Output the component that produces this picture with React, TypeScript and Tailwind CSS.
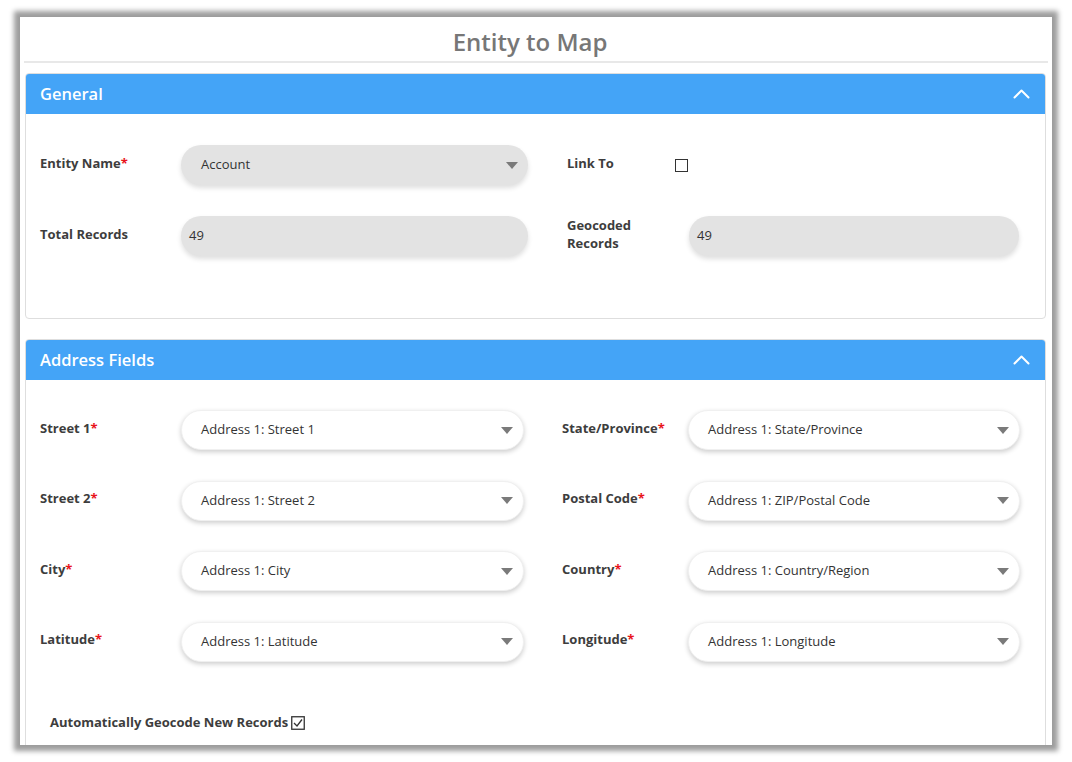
import type { ReactNode } from "react";

const FONT = { fontFamily: '"Open Sans", "Noto Sans", Arial, sans-serif' };

function Caret() {
	return (
		<svg width="12" height="7" viewBox="0 0 12 7" className="shrink-0">
			<path d="M0 0h12L6 7z" fill="#7a7a7a" />
		</svg>
	);
}

function Chevron() {
	return (
		<svg width="17" height="10" viewBox="0 0 17 10" fill="none" stroke="#fff" strokeWidth="2" strokeLinecap="round" strokeLinejoin="round">
			<polyline points="1.5,8.5 8.5,1.5 15.5,8.5" />
		</svg>
	);
}

function Label({ text, required, children }: { text: ReactNode; required?: boolean; children?: ReactNode }) {
	return (
		<div className="flex items-center pb-[5px]">
			<span className="text-[13px] font-bold leading-[18px] text-[#3d3d3d]">
				{text}
				{required && <span className="text-[#e8141b]">*</span>}
			</span>
			{children}
		</div>
	);
}

function GraySelect({ value }: { value: string }) {
	return (
		<div className="flex h-10 items-center justify-between rounded-full bg-[#e3e3e3] pl-5 pr-[10px] shadow-[0_3px_5px_rgba(0,0,0,0.13)]">
			<span className="text-[13px] text-[#333]">{value}</span>
			<Caret />
		</div>
	);
}

function GrayInput({ value }: { value: string }) {
	return (
		<div className="flex h-10 items-center rounded-full bg-[#e3e3e3] pl-2 shadow-[0_3px_5px_rgba(0,0,0,0.13)]">
			<span className="text-[13px] text-[#333]">{value}</span>
		</div>
	);
}

function WhiteSelect({ value }: { value: string }) {
	return (
		<div className="flex h-10 items-center justify-between rounded-full border border-[#f0f0f0] bg-white pl-[19px] pr-[10px] shadow-[0_2px_5px_rgba(0,0,0,0.2)]">
			<span className="text-[13px] text-[#333]">{value}</span>
			<Caret />
		</div>
	);
}

function Section({ title, children }: { title: string; children: ReactNode }) {
	return (
		<div className="ml-px mr-[2px] rounded-[4px] border border-[#dedede]">
			<div className="flex h-10 items-center justify-between rounded-t-[3px] bg-[#44a4f7] pl-[14px] pr-[15px]">
				<span className="text-[16.5px] font-semibold text-white">{title}</span>
				<Chevron />
			</div>
			{children}
		</div>
	);
}

const ADDRESS = [
	["Street 1", "Address 1: Street 1", "State/Province", "Address 1: State/Province"],
	["Street 2", "Address 1: Street 2", "Postal Code", "Address 1: ZIP/Postal Code"],
	["City", "Address 1: City", "Country", "Address 1: Country/Region"],
	["Latitude", "Address 1: Latitude", "Longitude", "Address 1: Longitude"],
];

export default function App() {
	return (
		<div className="min-h-[762px] bg-white pl-5 pt-[17px]" style={FONT}>
			<div className="h-[728px] w-[1032px] overflow-hidden bg-white px-1 shadow-[0_0_5px_6px_#9d9d9d]">
				{/* title */}
				<div className="border-b-2 border-[#e8e8e8] pb-[3px] pr-[12px] pt-[9px] text-center text-[24px] font-semibold leading-[32px] text-[#777]">
					Entity to Map
				</div>

				<div className="mt-[10px]">
					<Section title="General">
						<div className="grid grid-cols-[141px_347px_39px_122px_330px] gap-y-[31px] pb-[61px] pl-[14px] pt-[31px]">
							<Label text="Entity Name" required />
							<GraySelect value="Account" />
							<div />
							<Label text="Link To">
								<span className="ml-auto mr-px mt-[5px] h-[13px] w-[13px] border-[1.5px] border-[#333] bg-white" />
							</Label>
							<div />

							<Label text="Total Records" />
							<GrayInput value="49" />
							<div />
							<Label text={<>Geocoded<br />Records</>} />
							<GrayInput value="49" />
						</div>
					</Section>
				</div>

				<div className="mt-[20px]">
					<Section title="Address Fields">
						<div className="grid grid-cols-[141px_343px_38px_126px_332px] gap-y-[30.6px] pl-[14px] pt-[30px]">
							{ADDRESS.map(([l1, v1, l2, v2]) => (
								<div key={l1} className="contents">
									<Label text={l1} required />
									<WhiteSelect value={v1} />
									<div />
									<Label text={l2} required />
									<WhiteSelect value={v2} />
								</div>
							))}
						</div>
						<div className="flex items-center gap-[3px] pb-10 pl-[24px] pt-[51px]">
							<span className="text-[13px] font-bold text-[#3d3d3d]">Automatically Geocode New Records</span>
							<svg width="14" height="14" viewBox="0 0 14 14" fill="none">
								<rect x="0.75" y="0.75" width="12.5" height="12.5" stroke="#333" strokeWidth="1.3" />
								<polyline points="3,7 6,10 11,3.5" stroke="#333" strokeWidth="1.3" />
							</svg>
						</div>
					</Section>
				</div>
			</div>
		</div>
	);
}
